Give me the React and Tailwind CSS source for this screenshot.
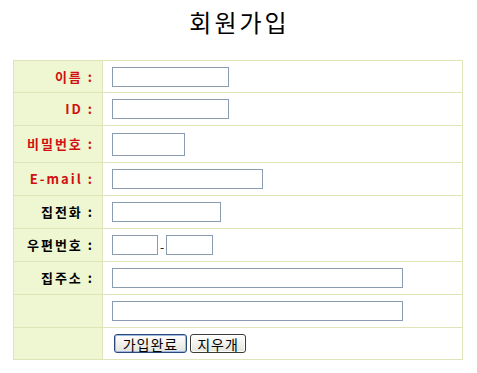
import React from "react";

const font = { fontFamily: '"Noto Sans CJK KR", "Noto Sans", sans-serif' };

function Row({ h, label, red, children }) {
  return (
    <div className={`flex border-b border-[#dfe5b8] last:border-b-0 ${h}`}>
      <div
        className={`w-[89px] shrink-0 bg-[#eef6d2] border-r border-[#dfe5b8] flex items-center justify-end pr-[8px] text-[13px] tracking-[2px] font-bold ${
          red ? "text-[#d01010]" : "text-black"
        }`}
      >
        {label}
      </div>
      <div className="flex-1 flex items-center pl-[9px] bg-white">{children}</div>
    </div>
  );
}

function Input({ w, h = "h-[20px]" }) {
  return (
    <input
      type="text"
      className={`${w} ${h} border border-[#8a9caf] bg-white outline-none`}
    />
  );
}

function Btn({ children, w, blue }) {
  return (
    <button
      className={`${w} h-[19px] rounded-[3px] border ${
        blue
          ? "border-[#274a7a] shadow-[inset_0_0_0_1px_#9fb9e4]"
          : "border-[#3b3b3b] shadow-[inset_0_0_0_1px_#ffffff]"
      } bg-gradient-to-b from-white to-[#e4e4dc] text-[14px] tracking-[1px] leading-[16px] text-black flex items-center justify-center`}
    >
      {children}
    </button>
  );
}

export default function App() {
  return (
    <div className="w-[477px] h-[373px] bg-white" style={font}>
      <div className="h-[60px] flex justify-center pt-[5px] pl-[2px]">
        <h1 className="text-[24px] leading-[34px] text-black font-normal tracking-[3px]">회원가입</h1>
      </div>
      <div className="w-[450px] ml-[13px] border border-[#dfe5b8]">
        <Row h="h-[32px]" label="이름 :" red>
          <Input w="w-[117px]" />
        </Row>
        <Row h="h-[33px]" label="ID :" red>
          <Input w="w-[117px]" />
        </Row>
        <Row h="h-[37px]" label="비밀번호 :" red>
          <Input w="w-[73px]" h="h-[23px]" />
        </Row>
        <Row h="h-[33px]" label="E-mail :" red>
          <Input w="w-[151px]" />
        </Row>
        <Row h="h-[33px]" label="집전화 :">
          <Input w="w-[109px]" />
        </Row>
        <Row h="h-[33px]" label="우편번호 :">
          <Input w="w-[46px]" />
          <span className="w-[8px] text-center text-[12px] leading-none mt-[4px]">-</span>
          <Input w="w-[47px]" />
        </Row>
        <Row h="h-[33px]" label="집주소 :">
          <Input w="w-[291px]" />
        </Row>
        <Row h="h-[33px]" label="">
          <Input w="w-[291px]" />
        </Row>
        <Row h="h-[31px]" label="">
          <div className="flex gap-[3px] ml-[2px]">
            <Btn w="w-[73px]" blue>가입완료</Btn>
            <Btn w="w-[56px]">지우개</Btn>
          </div>
        </Row>
      </div>
    </div>
  );
}
